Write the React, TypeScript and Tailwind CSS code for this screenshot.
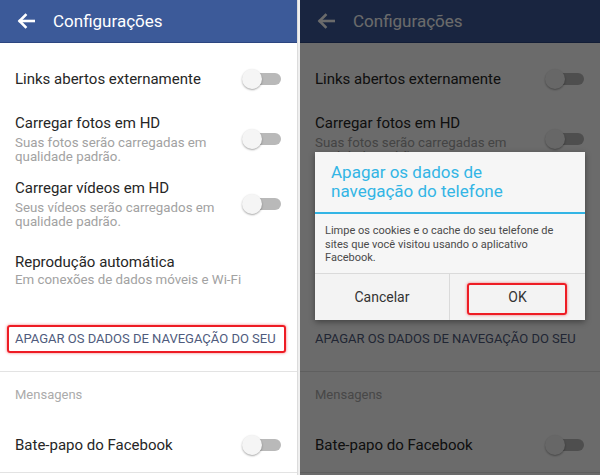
import React from "react";

const font = { fontFamily: "Roboto, 'Noto Sans', sans-serif" };

function ArrowLeft() {
    return (
        <svg width="18" height="16" viewBox="0 0 18 16" fill="none" stroke="white" strokeWidth="2.6" strokeLinecap="square">
            <path d="M17 8H3" />
            <path d="M8.5 2 2.5 8l6 6" strokeLinejoin="miter" />
        </svg>
    );
}

function Toggle() {
    return (
        <div className="relative h-5 w-[39px] shrink-0">
            <div className="absolute right-0 top-[4px] h-3 w-[34px] rounded-full bg-[#b9b9b9]" />
            <div className="absolute left-0 top-0 h-5 w-5 rounded-full bg-[#f5f5f5] shadow-[0_1px_2px_rgba(0,0,0,0.35)]" />
        </div>
    );
}

function Row({
                 title,
                 lines = [],
                 toggle = true,
                 className = "",
                 subGap = "mt-[3px]",
             }: {
    title: string;
    lines?: string[];
    toggle?: boolean;
    className?: string;
    subGap?: string;
}) {
    return (
        <div className={`flex items-center justify-between pl-[15px] pr-[16px] ${className}`}>
            <div className="flex flex-col">
                <div className="text-[15px] leading-[20px] text-[#262626]">{title}</div>
                {lines.length > 0 && (
                    <div className={`${subGap} text-[13.3px] leading-[14px] text-[#a2a2a2]`}>
                        {lines.map((l) => (
                            <div key={l}>{l}</div>
                        ))}
                    </div>
                )}
            </div>
            {toggle && <Toggle />}
        </div>
    );
}

function Screen({ highlight }: { highlight: boolean }) {
    return (
        <div className="flex h-[475px] flex-col bg-white" style={font}>
            {/* header */}
            <header className="flex h-[43px] shrink-0 items-center border-b border-[#2c4680] bg-[#3c5a99] pl-[17px]">
                <ArrowLeft />
                <span className="ml-[18px] text-[17px] leading-none text-white">Configurações</span>
            </header>

            <Row title="Links abertos externamente" className="mt-[26px]" />
            <Row
                title="Carregar fotos em HD"
                lines={["Suas fotos serão carregadas em", "qualidade padrão."]}
                className="mt-[24px]"
            />
            <Row
                title="Carregar vídeos em HD"
                lines={["Seus vídeos serão carregados em", "qualidade padrão."]}
                className="mt-[14px]"
            />
            <Row
                title="Reprodução automática"
                lines={["Em conexões de dados móveis e Wi-Fi"]}
                toggle={false}
                subGap="mt-[1px]"
                className="mt-[23px]"
            />

            {/* clear browsing data */}
            <div
                className={`ml-[7px] mr-[11px] mt-[38px] h-[28px] rounded-[3px] border-2 pl-[6px] ${
                    highlight
                        ? "border-[#ee1c24] shadow-[0_0_3px_rgba(238,28,36,0.6)]"
                        : "border-transparent"
                }`}
            >
                <div className="whitespace-nowrap text-[13px] leading-[24px] text-[#4f5b7d]">
                    APAGAR OS DADOS DE NAVEGAÇÃO DO SEU
                </div>
            </div>

            <div className="mt-[18px] h-px shrink-0 bg-[#e3e3e3]" />

            <div className="mt-[14px] pl-[15px] text-[13px] leading-[18px] text-[#ababab]">Mensagens</div>

            <Row title="Bate-papo do Facebook" className="mt-[31px]" />

            <div className="mb-[2px] mt-auto h-px shrink-0 bg-[#e3e3e3]" />
        </div>
    );
}

function Dialog() {
    return (
        <div className="absolute left-[15px] top-[152px] w-[270px] bg-[#f6f6f6] shadow-[0_2px_6px_rgba(0,0,0,0.4)]" style={font}>
            <div className="px-[16px] pb-[11px] pt-[11px] text-[17px] leading-[19px] text-[#33b5e5]">
                Apagar os dados de
                <br />
                navegação do telefone
            </div>
            <div className="h-[2px] bg-[#33b5e5]" />
            <div className="px-[10px] pb-[8px] pt-[10px] text-[11px] leading-[13.5px] text-[#4a4a4a]">
                Limpe os cookies e o cache do seu telefone de sites que você visitou usando o aplicativo Facebook.
            </div>
            <div className="grid h-[47px] grid-cols-2 border-t border-[#dadada] bg-[#f3f3f3] text-[14px] text-[#333]">
                <div className="flex items-center justify-center border-r border-[#dadada] pt-[2px]">Cancelar</div>
                <div className="relative flex items-center justify-center pt-[2px]">
                    OK
                    <div className="absolute bottom-[5px] left-[17px] right-[18px] top-[9px] rounded-[3px] border-2 border-[#ee1c24] shadow-[0_0_3px_rgba(238,28,36,0.6)]" />
                </div>
            </div>
        </div>
    );
}

export default function App() {
    return (
        <div className="flex h-[475px] w-[600px] overflow-hidden bg-white">
            <div className="w-[298px] shrink-0 border-r border-[#dcdcdc]">
                <Screen highlight />
            </div>
            <div className="w-[2px] shrink-0 bg-[#efefef]" />
            <div className="relative flex-1">
                <Screen highlight={false} />
                <div className="absolute inset-0 bg-black/[0.58]" />
                <Dialog />
            </div>
        </div>
    );
}
